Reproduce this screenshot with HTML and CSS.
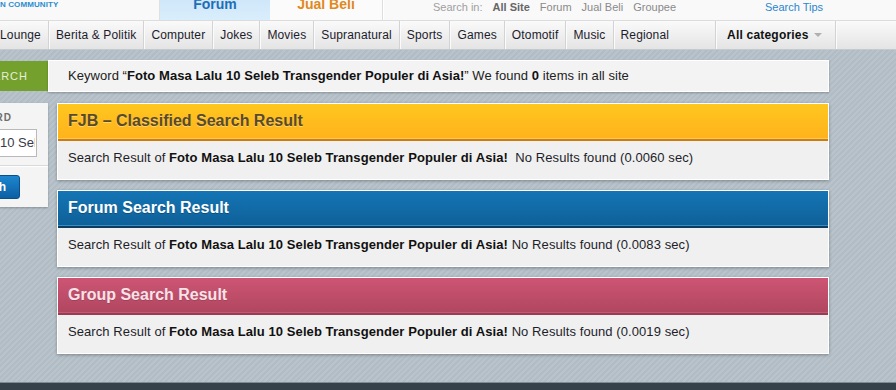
FILE: index.html
```html
<!DOCTYPE html>
<html>
<head>
<meta charset="utf-8">
<title>Search</title>
<link rel="stylesheet" href="styles.css">
</head>
<body>
<header class="top">
  <div class="logo">N COMMUNITY</div>
  <div class="tab tab-forum">Forum</div>
  <div class="tab tab-jb">Jual Beli</div>
  <div class="search-in">
    <span class="lbl">Search in:</span>
    <span class="cur">All Site</span>
    <span>Forum</span>
    <span>Jual Beli</span>
    <span>Groupee</span>
  </div>
  <a class="tips">Search Tips</a>
</header>
<nav class="nav">
  <span class="nav-item first">Lounge</span>
  <span class="nav-item">Berita &amp; Politik</span>
  <span class="nav-item">Computer</span>
  <span class="nav-item">Jokes</span>
  <span class="nav-item">Movies</span>
  <span class="nav-item">Supranatural</span>
  <span class="nav-item">Sports</span>
  <span class="nav-item">Games</span>
  <span class="nav-item">Otomotif</span>
  <span class="nav-item">Music</span>
  <span class="nav-item wide">Regional</span>
  <span class="nav-item all">All categories <i class="caret"></i></span>
</nav>
<main class="content">
  <div class="kw-row">
    <div class="kw-label">SEARCH</div>
    <div class="kw-bar">Keyword “<b>Foto Masa Lalu 10 Seleb Transgender Populer di Asia!</b>” We found <b>0</b> items in all site</div>
  </div>
  <div class="main">
    <aside class="side">
      <div class="side-label">KEYWORD</div>
      <div class="side-input"><span>10 Sel</span></div>
      <div class="side-sep"></div>
      <div class="side-btn-row"><span class="side-btn">Search</span></div>
    </aside>
    <div class="results">
      <section class="panel fjb">
        <h2 class="panel-head">FJB – Classified Search Result</h2>
        <div class="panel-body">Search Result of <b>Foto Masa Lalu 10 Seleb Transgender Populer di Asia!</b>&nbsp; No Results found (0.0060 sec)</div>
      </section>
      <section class="panel forum">
        <h2 class="panel-head">Forum Search Result</h2>
        <div class="panel-body">Search Result of <b>Foto Masa Lalu 10 Seleb Transgender Populer di Asia!</b> No Results found (0.0083 sec)</div>
      </section>
      <section class="panel group">
        <h2 class="panel-head">Group Search Result</h2>
        <div class="panel-body">Search Result of <b>Foto Masa Lalu 10 Seleb Transgender Populer di Asia!</b> No Results found (0.0019 sec)</div>
      </section>
    </div>
  </div>
</main>
<footer class="foot"></footer>
</body>
</html>
```
FILE: styles.css
```css
* { box-sizing: border-box; }
html, body { margin: 0; padding: 0; }
body {
  height: 390px;
  overflow: hidden;
  display: flex;
  flex-direction: column;
  font-family: "Liberation Sans", Arial, sans-serif;
  background-color: #b5c0c8;
  background-image: repeating-linear-gradient(135deg, #b8c3cb 0 2px, #b1bcc4 2px 4px);
  color: #222;
}

/* top header */
.top {
  height: 21px;
  flex: none;
  display: flex;
  background: #f9f9f9;
  border-bottom: 1px solid #dcdcdc;
  overflow: hidden;
}
.logo {
  width: 160px;
  border-right: 1px solid #e0e0e0;
  font-size: 8px;
  font-weight: bold;
  letter-spacing: 0.1px;
  line-height: 9px;
  color: #2a8dcf;
  white-space: nowrap;
}
.tab {
  font-size: 14px;
  font-weight: bold;
  line-height: 8px;
  text-align: center;
}
.tab-forum {
  width: 110px;
  background: linear-gradient(#cfe7fa, #d9eefc);
  color: #1c6fb8;
}
.tab-jb {
  width: 113px;
  background: #fbfbfb;
  color: #e0891c;
  border-right: 1px solid #dedede;
  box-shadow: 1px 0 0 #fff;
}
.search-in {
  display: flex;
  gap: 10px;
  padding-left: 50px;
  font-size: 11px;
  line-height: 14px;
  color: #8a8a8a;
}
.search-in .lbl { color: #a0a0a0; }
.search-in .cur { font-weight: bold; color: #666; }
.tips {
  margin-left: 89px;
  font-size: 11px;
  line-height: 14px;
  color: #2a86cf;
}

/* nav */
.nav {
  height: 29px;
  flex: none;
  display: flex;
  background: linear-gradient(#fafafa, #e4e4e4);
  border-bottom: 1px solid #c4c9cd;
  padding-top: 1px;
  font-size: 12px;
  letter-spacing: 0.15px;
  line-height: 27px;
  color: #1c1c2c;
  white-space: nowrap;
}
.nav-item {
  padding: 0 7px;
  border-right: 1px solid #d3d3d3;
  box-shadow: 1px 0 0 #fbfbfb;
  margin-top: -1px;
  line-height: 29px;
}
.nav-item.first { margin-left: -7px; }
.nav-item.wide { padding-right: 46px; }
.nav-item.all {
  padding: 0 13px 0 11px;
  font-weight: bold;
  letter-spacing: 0.2px;
  color: #111;
  display: flex;
  align-items: center;
}
.caret {
  display: inline-block;
  margin-left: 5px;
  width: 0;
  height: 0;
  border-left: 4px solid transparent;
  border-right: 4px solid transparent;
  border-top: 4px solid #b0b0b0;
}

/* content */
.content { flex: 1; }
.kw-row {
  margin-top: 10px;
  height: 32px;
  display: flex;
  align-items: center;
}
.kw-label {
  width: 48px;
  height: 30px;
  flex: none;
  background: #74a12d;
  color: #e6efd9;
  font-size: 11px;
  letter-spacing: 1px;
  line-height: 30px;
  display: flex;
  justify-content: flex-end;
  padding-right: 20px;
  white-space: nowrap;
  overflow: hidden;
}
.kw-bar {
  width: 781px;
  height: 32px;
  background: #f3f3f3;
  border: 1px solid #fff;
  box-shadow: 0 1px 2px rgba(0,0,0,0.25);
  padding-left: 19px;
  font-size: 13px;
  letter-spacing: 0.05px;
  line-height: 29px;
  white-space: nowrap;
}
.kw-bar b { color: #111; }

.main {
  margin-top: 11px;
  display: flex;
  gap: 9px;
  align-items: flex-start;
}
.side {
  width: 48px;
  flex: none;
  background: #f4f4f4;
  box-shadow: 0 1px 2px rgba(0,0,0,0.25);
  padding: 9px 0 8px;
  overflow: hidden;
}
.side-label {
  display: flex;
  justify-content: flex-end;
  padding-right: 36px;
  font-size: 10px;
  font-weight: bold;
  letter-spacing: 1px;
  line-height: 12px;
  color: #6e6e6e;
  white-space: nowrap;
}
.side-input {
  margin-top: 5px;
  width: 37px;
  height: 28px;
  background: #fff;
  border: 1px solid #b9b9b9;
  border-left: none;
  font-size: 13px;
  line-height: 26px;
  color: #3a3a4a;
  white-space: nowrap;
  overflow: hidden;
}
.side-input span {
  display: block;
  width: 35px;
  overflow: hidden;
}
.side-sep {
  margin-top: 8px;
  height: 1px;
  background: #dadada;
  box-shadow: 0 1px 0 #fff;
}
.side-btn-row {
  margin-top: 9px;
  width: 20px;
  display: flex;
  justify-content: flex-end;
  overflow: hidden;
}
.side-btn {
  flex: none;
  height: 24px;
  padding: 0 13px 0 20px;
  background: linear-gradient(#1d86cf, #0b5fa3);
  border: 1px solid #0a4f88;
  border-radius: 3px;
  color: #fff;
  font-size: 12px;
  font-weight: bold;
  line-height: 22px;
  white-space: nowrap;
}

.results {
  width: 772px;
  display: flex;
  flex-direction: column;
  gap: 10px;
}
.panel {
  border: 1px solid #fff;
  box-shadow: 0 1px 3px rgba(0,0,0,0.3);
  background: #f0f0f0;
}
.panel-head {
  margin: 0;
  height: 37px;
  padding: 7px 0 0 10px;
  font-size: 16px;
  font-weight: bold;
  line-height: 20px;
  white-space: nowrap;
}
.panel-body {
  height: 38px;
  padding: 8px 0 0 10px;
  font-size: 13px;
  letter-spacing: 0.08px;
  line-height: 18px;
  color: #1e1e2a;
  white-space: nowrap;
}
.panel-body b { color: #111; }

.fjb .panel-head {
  background: linear-gradient(#ffc71e, #ffb21c);
  border-bottom: 2px solid #cd7b16;
  box-shadow: inset 0 -1px 0 #ffcc4a;
  color: #594a2d;
  text-shadow: 0 1px 0 rgba(255,230,160,0.6);
}
.forum .panel-head {
  background: linear-gradient(#1475b5, #0f6098);
  border-bottom: 2px solid #0c3d5f;
  box-shadow: inset 0 -1px 0 #3b8cc2;
  color: #fff;
  text-shadow: 0 1px 0 rgba(0,0,0,0.25);
}
.group .panel-head {
  background: linear-gradient(#cd5574, #b0465f);
  border-bottom: 2px solid #9b3c55;
  box-shadow: inset 0 -1px 0 #c25a76;
  color: #f6e2e8;
  text-shadow: 0 1px 0 rgba(0,0,0,0.15);
}

.foot {
  height: 8px;
  flex: none;
  background: #35424a;
  border-top: 1px solid #7f8c94;
}
```
